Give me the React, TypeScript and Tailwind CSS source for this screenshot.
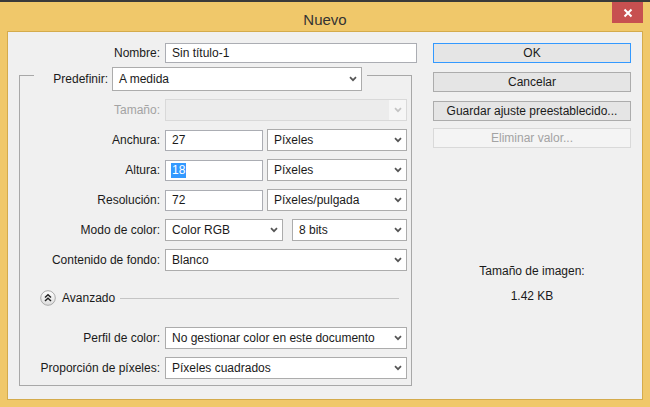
import React from "react";

const Chevron = ({ light = false }: { light?: boolean }) => (
  <svg width="8" height="6" viewBox="0 0 8 6" className="shrink-0">
    <polyline
      points="1,1.2 4,4.2 7,1.2"
      fill="none"
      stroke={light ? "#c4c4c4" : "#555555"}
      strokeWidth="1.7"
    />
  </svg>
);

const Select = ({
  value,
  className,
}: {
  value: string;
  className: string;
}) => (
  <div
    className={
      "flex items-center justify-between border border-[#acacac] bg-white pl-[6px] pr-[4px] text-[#1a1a1a] " +
      className
    }
  >
    <span className="whitespace-nowrap">{value}</span>
    <Chevron />
  </div>
);

const Label = ({ children, disabled = false }: { children: React.ReactNode; disabled?: boolean }) => (
  <div
    className={
      disabled
        ? "w-[145px] shrink-0 text-right pr-[5px] text-[#a3a3a3] whitespace-nowrap"
        : "w-[145px] shrink-0 text-right pr-[5px] text-[#1a1a1a] whitespace-nowrap"
    }
  >
    {children}
  </div>
);

const Input = ({ children, className }: { children: React.ReactNode; className: string }) => (
  <div
    className={
      "flex items-center border border-[#abadb3] bg-white pl-[6px] text-[#1a1a1a] whitespace-nowrap " +
      className
    }
  >
    {children}
  </div>
);

export default function App() {
  return (
    <div className="w-[650px] h-[407px] bg-[#f0c86a] flex flex-col font-['Liberation_Sans',Arial,sans-serif] text-[12px] leading-[14px] overflow-hidden">
      <div className="h-[2px] bg-[#3a3a3a] shrink-0" />
      <div className="h-[29px] shrink-0 flex items-start">
        <div className="flex-1 flex justify-center pt-[9px] pl-[38px]">
          <span className="text-[15px] leading-[17px] text-[#333333]">Nuevo</span>
        </div>
        <div className="w-[31px] h-[21px] mr-[7px] bg-[#c75050] flex items-center justify-center">
          <svg width="10" height="10" viewBox="0 0 10 10">
            <path d="M1.5 1.5 L8.5 8.5 M8.5 1.5 L1.5 8.5" stroke="#ffffff" strokeWidth="2" />
          </svg>
        </div>
      </div>
      <div className="flex-1 mx-[7px] mb-[7px] border border-[#d4ab4c] bg-[#f0f0f0] flex pt-[11px]">
        {/* Left column */}
        <div className="w-[409px] flex flex-col">
          <div className="flex items-center h-[20px]">
            <div className="w-[157px] text-right pr-[5px] text-[#1a1a1a]">Nombre:</div>
            <Input className="w-[252px] h-[20px]">Sin título-1</Input>
          </div>

          <div className="mt-[12px] ml-[11px] w-[393px] border border-[#a8a8a8] flex flex-col pb-[6px]">
            {/* Legend row */}
            <div className="-mt-[9px] flex">
              <div className="ml-[14px] flex items-center bg-[#f0f0f0] pr-[5px]">
                <div className="w-[78px] text-right pr-[4px] text-[#1a1a1a]">Predefinir:</div>
                <Select value="A medida" className="w-[250px] h-[24px]" />
              </div>
            </div>

            <div className="mt-[8px] flex items-center h-[22px]">
              <Label disabled>Tamaño:</Label>
              <div className="w-[242px] h-[22px] border border-[#d9d9d9] bg-[#ececec] flex justify-end">
                <div className="w-[17px] h-full bg-[#f6f6f6] flex items-center justify-center">
                  <Chevron light />
                </div>
              </div>
            </div>

            <div className="mt-[8px] flex items-center h-[22px]">
              <Label>Anchura:</Label>
              <Input className="w-[98px] h-[21px]">27</Input>
              <Select value="Píxeles" className="w-[140px] h-[22px] ml-[4px]" />
            </div>

            <div className="mt-[8px] flex items-center h-[22px]">
              <Label>Altura:</Label>
              <Input className="w-[98px] h-[21px]">
                <span className="bg-[#3399ff] text-white px-[1px] -ml-[1px] leading-[15px]">18</span>
              </Input>
              <Select value="Píxeles" className="w-[140px] h-[22px] ml-[4px]" />
            </div>

            <div className="mt-[8px] flex items-center h-[22px]">
              <Label>Resolución:</Label>
              <Input className="w-[98px] h-[21px]">72</Input>
              <Select value="Píxeles/pulgada" className="w-[140px] h-[22px] ml-[4px]" />
            </div>

            <div className="mt-[8px] flex items-center h-[22px]">
              <Label>Modo de color:</Label>
              <Select value="Color RGB" className="w-[118px] h-[22px]" />
              <Select value="8 bits" className="w-[115px] h-[22px] ml-[9px]" />
            </div>

            <div className="mt-[8px] flex items-center h-[22px]">
              <Label>Contenido de fondo:</Label>
              <Select value="Blanco" className="w-[242px] h-[22px]" />
            </div>

            <div className="mt-[19px] flex items-center h-[16px] pl-[20px]">
              <svg width="16" height="16" viewBox="0 0 16 16" className="shrink-0">
                <defs>
                  <linearGradient id="av" x1="0" y1="0" x2="0" y2="1">
                    <stop offset="0" stopColor="#ffffff" />
                    <stop offset="1" stopColor="#dcdcdc" />
                  </linearGradient>
                </defs>
                <circle cx="8" cy="8" r="7.3" fill="url(#av)" stroke="#a9a9a9" strokeWidth="1" />
                <path d="M5 7.5 L8 4.8 L11 7.5 M5 11 L8 8.3 L11 11" fill="none" stroke="#222222" strokeWidth="1.5" />
              </svg>
              <span className="ml-[6px] text-[#1a1a1a]">Avanzado</span>
              <div className="ml-[5px] w-[279px] h-px bg-[#c4c4c4]" />
            </div>

            <div className="mt-[21px] flex items-center h-[22px]">
              <Label>Perfil de color:</Label>
              <Select value="No gestionar color en este documento" className="w-[242px] h-[22px]" />
            </div>

            <div className="mt-[8px] flex items-center h-[22px]">
              <Label>Proporción de píxeles:</Label>
              <Select value="Píxeles cuadrados" className="w-[242px] h-[22px]" />
            </div>
          </div>
        </div>

        {/* Right column */}
        <div className="ml-[16px] w-[198px] flex flex-col text-[#1a1a1a]">
          <div className="h-[20px] border border-[#3399ff] bg-[#e5e5e5] flex items-center justify-center">OK</div>
          <div className="mt-[9px] h-[20px] border border-[#acacac] bg-[#e5e5e5] flex items-center justify-center">Cancelar</div>
          <div className="mt-[9px] h-[20px] border border-[#acacac] bg-[#e5e5e5] flex items-center justify-center whitespace-nowrap">
            Guardar ajuste preestablecido...
          </div>
          <div className="mt-[7px] h-[20px] border border-[#d9d9d9] bg-[#f4f4f4] flex items-center justify-center text-[#a3a3a3]">
            Eliminar valor...
          </div>
          <div className="mt-[115px] text-center leading-[16px]">Tamaño de imagen:</div>
          <div className="mt-[9px] text-center leading-[16px]">1.42 KB</div>
        </div>
      </div>
    </div>
  );
}
